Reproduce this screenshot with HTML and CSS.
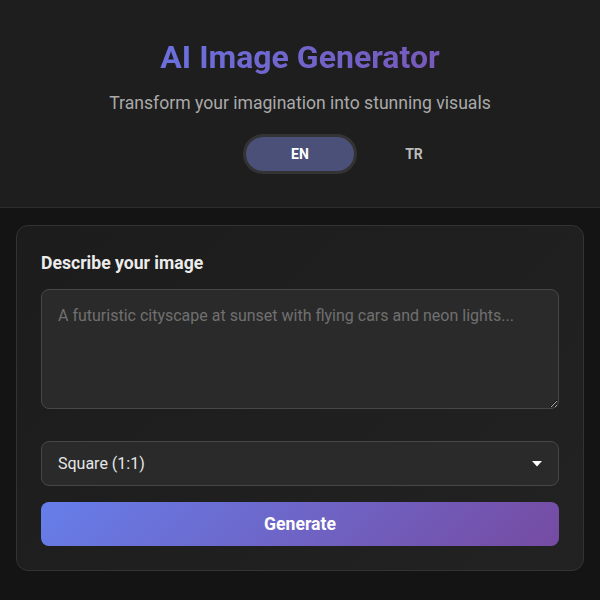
FILE: index.html
```html
<!DOCTYPE html>
<html lang="en">
<head>
<meta charset="utf-8">
<title>AI Image Generator</title>
<link rel="stylesheet" href="styles.css">
</head>
<body>
<header class="header">
  <h1 class="title">AI Image Generator</h1>
  <p class="subtitle">Transform your imagination into stunning visuals</p>
  <div class="lang">
    <button class="lang-btn active">EN</button>
    <button class="lang-btn">TR</button>
  </div>
</header>
<main class="main">
  <section class="card">
    <h2 class="label">Describe your image</h2>
    <textarea class="prompt" placeholder="A futuristic cityscape at sunset with flying cars and neon lights..."></textarea>
    <div class="select-wrap">
      <select class="select">
        <option>Square (1:1)</option>
        <option>Portrait (3:4)</option>
        <option>Landscape (4:3)</option>
      </select>
      <svg class="arrow" width="10" height="6" viewBox="0 0 10 6"><path d="M0 0 L10 0 L5 5.5 Z" fill="#ffffff"/></svg>
    </div>
    <button class="generate">Generate</button>
  </section>
</main>
</body>
</html>
```
FILE: styles.css
```css
* { box-sizing: border-box; }
html, body { margin: 0; padding: 0; }
body {
  background: #141414;
  font-family: Roboto, "Noto Sans", "Liberation Sans", sans-serif;
  color: #e0e0e0;
  min-height: 600px;
}
.header {
  background: #1e1e1e;
  border-bottom: 1px solid #2e2e2e;
  padding: 38px 16px 33px;
  text-align: center;
}
.title {
  margin: 0;
  font-size: 32px;
  font-weight: 700;
  line-height: normal;
  background: linear-gradient(135deg, #6a72e0, #7858b8);
  -webkit-background-clip: text;
  background-clip: text;
  color: transparent;
  display: inline-block;
}
.subtitle {
  margin: 17px 0 0;
  font-size: 17.6px;
  line-height: normal;
  color: #aaaaaa;
}
.lang {
  margin-top: 21px;
  display: grid;
  grid-template-columns: repeat(3, 114px);
  justify-content: center;
}
.lang-btn {
  height: 40px;
  border: 3px solid transparent;
  border-radius: 20px;
  background: transparent;
  color: #bbbbbb;
  font-family: inherit;
  font-size: 14px;
  font-weight: 700;
  cursor: pointer;
}
.lang-btn.active {
  grid-column: 2;
  background: #4a5078;
  border-color: #333333;
  color: #ffffff;
}
.main {
  padding: 17px 16px 16px;
}
.card {
  background: linear-gradient(135deg, #1c1c1c, #222222);
  border: 1px solid #333333;
  border-radius: 12px;
  padding: 24px;
  display: flex;
  flex-direction: column;
}
.label {
  margin: 0 0 13px;
  font-size: 17.6px;
  line-height: 1.5;
  font-weight: 700;
  color: #ececec;
}
.prompt {
  display: block;
  width: 100%;
  height: 120px;
  background: #2a2a2a;
  border: 1px solid #474747;
  border-radius: 8px;
  padding: 16px;
  font-family: inherit;
  font-size: 16px;
  line-height: 1.2;
  color: #e0e0e0;
  resize: vertical;
  outline: none;
}
.prompt::placeholder { color: #707070; }
.select-wrap {
  position: relative;
  margin-top: 32px;
}
.select {
  display: block;
  width: 100%;
  height: 45px;
  appearance: none;
  -webkit-appearance: none;
  background: #2a2a2a;
  border: 1px solid #474747;
  border-radius: 8px;
  padding: 0 16px;
  font-family: inherit;
  font-size: 16px;
  color: #e6e6e6;
  outline: none;
}
.arrow {
  position: absolute;
  right: 17px;
  top: 20px;
  pointer-events: none;
}
.generate {
  margin-top: 16px;
  height: 44px;
  border: none;
  border-radius: 8px;
  background: linear-gradient(135deg, #667eea, #764ba2);
  color: #ffffff;
  font-family: inherit;
  font-size: 17.6px;
  font-weight: 700;
  cursor: pointer;
}
```
